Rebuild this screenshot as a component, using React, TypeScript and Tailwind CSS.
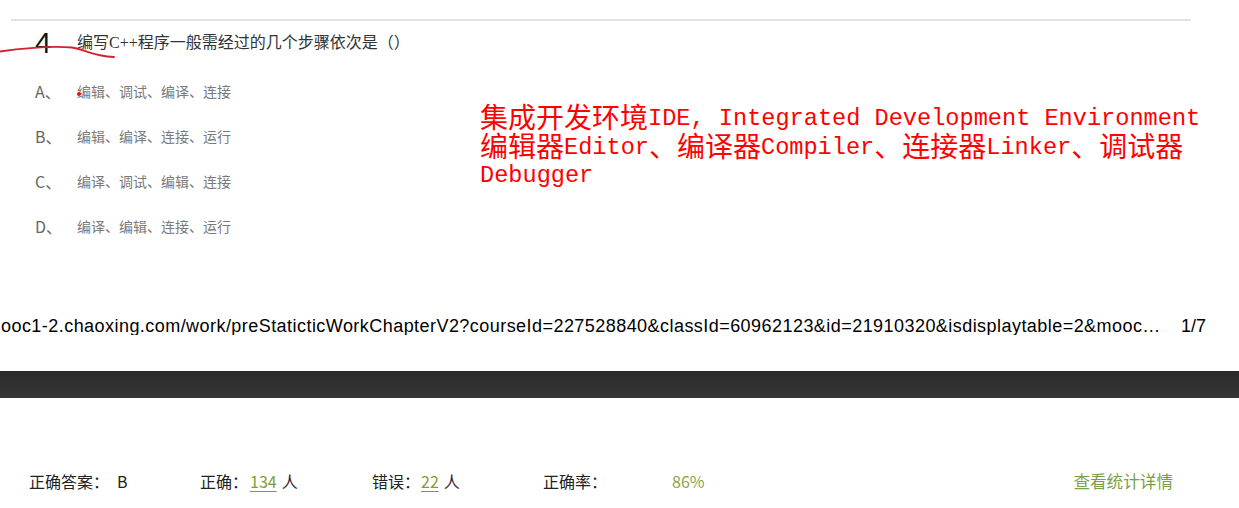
export default function App() {
  const options = [
    { k: "A、", t: "编辑、调试、编译、连接" },
    { k: "B、", t: "编辑、编译、连接、运行" },
    { k: "C、", t: "编译、调试、编辑、连接" },
    { k: "D、", t: "编译、编辑、连接、运行" },
  ];
  const cjk = "font-['Noto_Sans_CJK_SC',sans-serif]";
  const redMono = "text-[23.6px] align-[3.5px] font-['Liberation_Mono',monospace]";
  return (
    <div className="relative w-[1239px] h-[508px] bg-white overflow-hidden">
      <div className="h-[19px]" />
      <div className="ml-[11px] w-[1180px] h-[2px] bg-[#e2e2e2]" />

      {/* question */}
      <div className="flex items-center h-[42px] pl-[35px] mt-[1px]">
        <span className="w-[42px] shrink-0 text-[29px] leading-none text-[#111] font-['Liberation_Sans',sans-serif]">4</span>
        <span className="text-[16px] leading-none text-[#333] -mt-[1px] font-['Liberation_Serif','Noto_Sans_CJK_SC',serif]">
          编写C++程序一般需经过的几个步骤依次是（）
        </span>
      </div>

      {/* options */}
      <div className="mt-[4px]">
        {options.map((o) => (
          <div key={o.k} className="flex items-center h-[45px] pl-[35px]">
            <span className={`w-[42px] shrink-0 text-[16px] leading-none text-[#666] ${cjk}`}>{o.k}</span>
            <span className={`text-[14px] leading-none text-[#7a7a7a] ${cjk}`}>{o.t}</span>
          </div>
        ))}
      </div>

      {/* url line */}
      <div className="flex items-center h-[20px] mt-[68px] pl-[1px] text-[18px] leading-none text-black font-['Liberation_Sans',sans-serif] whitespace-nowrap">
        <span className="w-[1180px] shrink-0 overflow-hidden tracking-[0.45px]">
          ooc1-2.chaoxing.com/work/preStaticticWorkChapterV2?courseId=227528840&amp;classId=60962123&amp;id=21910320&amp;isdisplaytable=2&amp;mooc…
        </span>
        <span>1/7</span>
      </div>

      {/* dark band */}
      <div className="mt-[35px] h-[27px] bg-linear-to-b from-[#2a2a2a] to-[#363636]" />

      {/* stats */}
      <div className={`flex items-center h-[20px] mt-[73px] pl-[29px] pr-[66px] text-[16px] leading-none text-[#222] ${cjk}`}>
        <div className="w-[171px] shrink-0 flex items-center">
          <span>正确答案：</span>
          <span className="ml-[8px]">B</span>
        </div>
        <div className="w-[172px] shrink-0 flex items-center">
          <span>正确：</span>
          <span className="ml-[2px] text-[#7d9d34] underline underline-offset-[3px]">134</span>
          <span className="ml-[5px]">人</span>
        </div>
        <div className="w-[171px] shrink-0 flex items-center">
          <span>错误：</span>
          <span className="ml-[1px] text-[#7d9d34] underline underline-offset-[3px]">22</span>
          <span className="ml-[5px]">人</span>
        </div>
        <div className="w-[129px] shrink-0">正确率：</div>
        <div className="text-[#86a73f]">86%</div>
        <div className="ml-auto text-[16.6px] text-[#78a145]">查看统计详情</div>
      </div>

      {/* annotations */}
      <svg className="absolute left-0 top-[40px]" width="120" height="24" viewBox="0 40 120 24">
        <path
          d="M0 51.5 C 25 48, 55 46, 72 47.5 C 84 49, 92 56, 114 57"
          fill="none"
          stroke="#d42030"
          strokeWidth="1.8"
          strokeLinecap="round"
        />
      </svg>
      <div className="absolute left-[77px] top-[92px] w-[4px] h-[4px] rounded-full bg-[#e8101a]" />

      <div className={`absolute left-[480px] top-[102px] text-[#ff0000] whitespace-nowrap text-[28px] leading-[28.5px] ${cjk}`}>
        <div className="h-[28.5px]">
          集成开发环境<span className={redMono}>IDE, Integrated Development Environment</span>
        </div>
        <div className="h-[28.5px]">
          编辑器<span className={redMono}>Editor</span>、编译器<span className={redMono}>Compiler</span>、连接器<span className={redMono}>Linker</span>、调试器
        </div>
        <div className="h-[28.5px]">
          <span className={redMono}>Debugger</span>
        </div>
      </div>
    </div>
  );
}
